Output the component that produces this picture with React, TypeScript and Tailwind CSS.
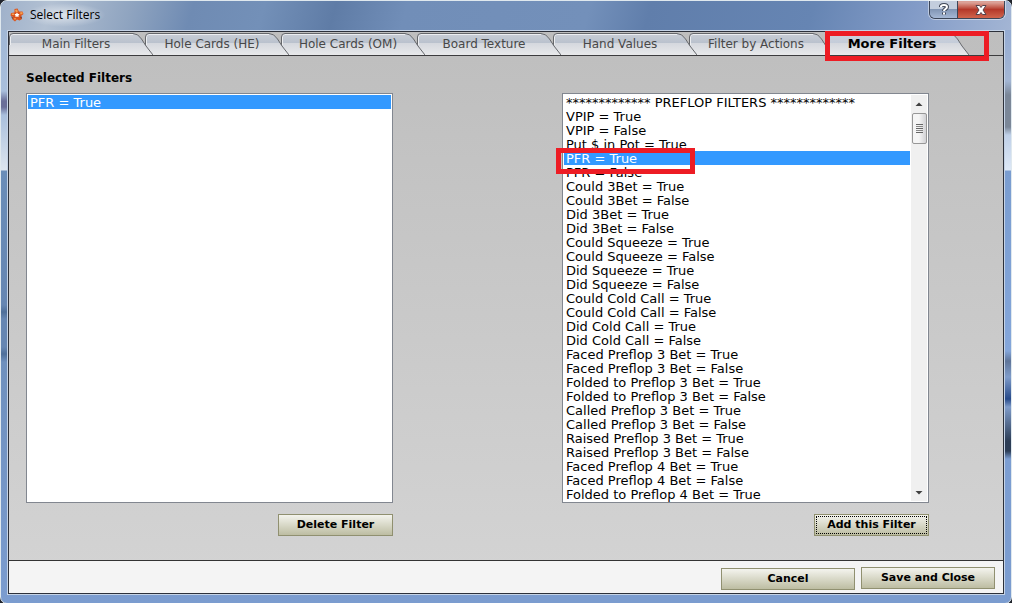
import React, { useState } from 'react';

const TABS = [
    'Main Filters',
    'Hole Cards (HE)',
    'Hole Cards (OM)',
    'Board Texture',
    'Hand Values',
    'Filter by Actions',
    'More Filters',
];

const PREFLOP_FILTERS = [
    '************* PREFLOP FILTERS *************',
    'VPIP = True',
    'VPIP = False',
    'Put $ in Pot = True',
    'PFR = True',
    'PFR = False',
    'Could 3Bet = True',
    'Could 3Bet = False',
    'Did 3Bet = True',
    'Did 3Bet = False',
    'Could Squeeze = True',
    'Could Squeeze = False',
    'Did Squeeze = True',
    'Did Squeeze = False',
    'Could Cold Call = True',
    'Could Cold Call = False',
    'Did Cold Call = True',
    'Did Cold Call = False',
    'Faced Preflop 3 Bet = True',
    'Faced Preflop 3 Bet = False',
    'Folded to Preflop 3 Bet = True',
    'Folded to Preflop 3 Bet = False',
    'Called Preflop 3 Bet = True',
    'Called Preflop 3 Bet = False',
    'Raised Preflop 3 Bet = True',
    'Raised Preflop 3 Bet = False',
    'Faced Preflop 4 Bet = True',
    'Faced Preflop 4 Bet = False',
    'Folded to Preflop 4 Bet = True',
];

const AppLogo: React.FC = () => (
    <svg width="14" height="14" viewBox="0 0 14 14" aria-hidden="true">
        <path d="M4.500 1L7.500 .5 9 3.500 12.500 3.500 13.500 6 11 8 12 11 9.500 12.500 7 11.500 5 13.500 2.500 11.500 3 9 .5 7.500 1 5 4.500 4.500z" fill="#d9541e" />
        <path d="M5 2l2-.5 1 2-2 1zM10 4.500l2.500-.5 0 2-2 .5zM1.500 5.500l2.500 0 0 1.500-2 0zM4 10l2 0-1 2.500z" fill="#f4a052" />
        <path d="M1 8l2 1.500-.5 2zM12 8.500l-2 .5 1.500 2z" fill="#7c3a2a" />
        <path d="M7 4.500l1 1.500h1.500L8.500 7.500v1.500L7 8.500 5.500 9V7.500L4.500 6H6z" fill="#fff" />
    </svg>
);

const WindowButtons: React.FC = () => (
    <div className="flex h-[18px] rounded-b-md border border-t-0 border-[#3c4658] overflow-hidden shadow-[0_0_0_1px_rgba(255,255,255,0.45)]">
        <button aria-label="Help" className="w-7 flex items-center justify-center border-r border-[#3c4658] bg-linear-to-b from-[#c3cddd] from-45% via-[#8296b5] via-50% to-[#a5b8d5]">
            <svg width="10" height="13" viewBox="0 0 10 13" fill="none" aria-hidden="true">
                <path d="M2 4V3.500Q2 2 5 2T8 4Q8 5 6.500 6T5 8M5 9.500V11.500" stroke="#3f4757" strokeWidth="4" />
                <path d="M2 4V3.500Q2 2 5 2T8 4Q8 5 6.500 6T5 8M5 9.500V11.500" stroke="#fff" strokeWidth="2" />
            </svg>
        </button>
        <button aria-label="Close" className="w-[46px] flex items-center justify-center bg-linear-to-b from-[#dba096] from-10% via-[#b4382a] via-50% to-[#d0644c]">
            <svg width="12" height="12" viewBox="0 0 12 12" aria-hidden="true">
                <path d="M1 1.500H4.500L6 3.500 7.500 1.500H11L8 6 11 10.500H7.500L6 8.500 4.500 10.500H1L4 6Z" fill="#fff" stroke="#54424c" />
            </svg>
        </button>
    </div>
);

interface TabProps {
    label: string;
    active: boolean;
    order: number;
    onSelect: () => void;
}

// Every tab is wider than its slot, so its slanted edge lies over the next one.
const Tab: React.FC<TabProps> = ({ label, active, order, onSelect }) => (
    <div className="relative -mr-2 h-[22px] w-36 shrink-0" style={{ zIndex: active ? TABS.length + 1 : TABS.length - order }}>
        <button
            role="tab"
            aria-selected={active}
            onClick={onSelect}
            className={`relative isolate block h-full w-full pr-[10px] pb-px leading-5 whitespace-nowrap ${active ? 'text-[13px] font-bold text-black' : 'text-[12px] text-[#484848]'}`}
        >
            <svg className="absolute inset-0 -z-10" width="144" height="22" viewBox="0 0 144 22" aria-hidden="true">
                <defs>
                    <linearGradient id={`tab-${order}`} x1="0" y1="0" x2="0" y2="1">
                        <stop offset="0" stopColor={active ? '#ccd2dc' : '#c9ced6'} />
                        <stop offset="0.45" stopColor={active ? '#c4ccd9' : '#b9c1cd'} />
                        <stop offset="0.46" stopColor="#d5d8de" />
                        <stop offset="1" stopColor="#e8e9eb" />
                    </linearGradient>
                </defs>
                <path d="M.5 22V4Q.5 .5 4 .5H124Q129 .5 132.500 6L137 13 144 22Z" fill={`url(#tab-${order})`} />
                <path d="M1.500 12V4Q1.500 1.500 4 1.500H124" fill="none" stroke="#eceef1" />
                <path d="M.5 12V4Q.5 .5 4 .5H124Q129 .5 132.500 6L137 13 144 22" fill="none" stroke="#66686c" />
            </svg>
            {label}
        </button>
        {active && (
            <div className="pointer-events-none absolute -top-[2px] left-0 h-[30px] w-[164px] border-[5px] border-[#ed1c24]" />
        )}
    </div>
);

interface FilterListProps {
    id: string;
    label?: string;
    items: string[];
    value: string;
    onChange: (value: string) => void;
}

const FilterList: React.FC<FilterListProps> = ({ id, label, items, value, onChange }) => (
    <select
        id={id}
        aria-label={label}
        size={29}
        value={value}
        onChange={(e) => onChange(e.target.value)}
        className="block h-[408px] min-w-0 flex-1 appearance-none overflow-y-auto rounded-none border-0 bg-white p-px text-[13px] leading-[14px] text-black outline-none [scrollbar-width:none]"
    >
        {items.map((item) => (
            <option
                key={item}
                value={item}
                className="h-[14px] min-h-0 px-[2px] py-0 leading-[14px] checked:bg-linear-to-r checked:from-[#3399ff] checked:to-[#3399ff] checked:[-webkit-text-fill-color:white]"
            >
                {item}
            </option>
        ))}
    </select>
);

const ScrollBar: React.FC = () => (
    <div className="my-px mr-px flex w-4 flex-col items-center bg-[#f0f0f0]" aria-hidden="true">
        <svg width="16" height="18" viewBox="0 0 16 18">
            <path d="M4.500 11L8 7.500 11.500 11Z" fill="#404040" />
        </svg>
        <div className="flex h-[31px] w-[15px] flex-col items-center justify-center gap-px rounded-xs border border-[#979797] bg-linear-to-r from-[#f5f5f5] from-45% to-[#d2d2d5]">
            <i className="h-px w-[7px] bg-[#666]" />
            <i className="h-px w-[7px] bg-[#888]" />
            <i className="h-px w-[7px] bg-[#666]" />
            <i className="h-px w-[7px] bg-[#888]" />
            <i className="h-px w-[7px] bg-[#666]" />
        </div>
        <svg className="mt-auto" width="16" height="18" viewBox="0 0 16 18">
            <path d="M4.500 8L8 11.500 11.500 8Z" fill="#404040" />
        </svg>
    </div>
);

const BUTTON =
    'flex h-[22px] items-center justify-center border border-[#909070] bg-linear-to-b from-[#f4f4ee] to-[#bdbda2] text-[11px] font-bold whitespace-nowrap text-black';

const App: React.FC = () => {
    const [tab, setTab] = useState('More Filters');
    const [selected, setSelected] = useState<string[]>(['PFR = True']);
    const [current, setCurrent] = useState('PFR = True');
    const [available, setAvailable] = useState('PFR = True');

    const addFilter = () => {
        if (!selected.includes(available)) {
            setSelected([...selected, available]);
        }
    };

    const deleteFilter = () => setSelected(selected.filter((item) => item !== current));

    return (
        <div className="flex min-h-screen flex-col bg-[#20242c] pb-px font-['Verdana','DejaVu_Sans',sans-serif]">
            <div className="flex flex-1 flex-col rounded-[7px] border border-[#dfe8ee] bg-[linear-gradient(#9db4d2,#a9bfdc_90px,#6a6f98_100px,#6a6f98_106px,#a9bfdc_114px,#dde5ef_169px,#6a8db8_170px,#6686b2_304px,#4f6f99_311px,#6686b2_318px,#6686b2_346px,#4f6f99_353px,#6f90bd_361px,#7b9ccf),linear-gradient(#8ca5d1,#a3b6d4_80px,#7b8798_94px,#7b8798_126px,#bfd0e8_134px,#dde8f6_169px,#7a9dd0_170px,#84a6da_350px,#5f7599_360px,#7f9cca_376px,#274a8a_398px,#7f9cca_406px,#2c3d56_440px,#2c3d56_450px,#7c9ed2_458px,#7b9ccf)] bg-[length:50%_100%] bg-[position:left,right] bg-no-repeat px-[6px] pb-2">
                <div className="-mx-[6px] flex h-[29px] items-start justify-between rounded-t-[6px] bg-[linear-gradient(105deg,#9fb1ca,#b3c1d3_5%,#8fa4c0_13%,#6f8bb3_19%,#7390b8_26%,#5f7ca6_33%,#718eb8_40%,#7390ba_58%,#607eab_64%,#6685b3_80%,#829bc7_90%,#a3b5d4)] pl-[9px] pr-[6px]">
                    <div className="flex h-7 items-center">
                        <AppLogo />
                        <h1 className="bg-radial from-white/60 to-transparent to-70% px-[6px] py-1 font-['Segoe_UI','Open_Sans',sans-serif] text-[12px] leading-4 text-black">Select Filters</h1>
                    </div>
                    <WindowButtons />
                </div>

                <main className="flex flex-1 flex-col border border-[#c5d3e6]">
                    <div className="flex flex-1 flex-col border border-[#2c303a] bg-linear-to-b from-[#bebebe] to-[#d4d4d4]">
                        <div role="tablist" className="isolate flex border-b border-[#3c3c3e] pt-px">
                            {TABS.map((label, i) => (
                                <Tab key={label} label={label} order={i} active={tab === label} onSelect={() => setTab(label)} />
                            ))}
                        </div>

                        <div className="flex flex-1 gap-[169px] pt-3 pr-[74px] pb-6 pl-[17px]">
                            <section className="flex min-w-0 flex-1 flex-col">
                                <label htmlFor="selected-filters" className="h-[25px] text-[12px] leading-5 font-bold">
                                    Selected Filters
                                </label>
                                <div className="flex border border-[#828790] bg-white">
                                    <FilterList id="selected-filters" items={selected} value={current} onChange={setCurrent} />
                                </div>
                                <button onClick={deleteFilter} className={`${BUTTON} mt-[11px] w-[115px] self-end`}>
                                    Delete Filter
                                </button>
                            </section>

                            <section className="flex min-w-0 flex-1 flex-col pt-[25px]">
                                <div className="relative flex border border-[#828790] bg-white">
                                    <FilterList
                                        id="available-filters"
                                        label="Available Filters"
                                        items={PREFLOP_FILTERS}
                                        value={available}
                                        onChange={setAvailable}
                                    />
                                    <ScrollBar />
                                    <div className="pointer-events-none absolute top-[54px] -left-[7px] h-[26px] w-[139px] border-[5px] border-[#ed1c24]" />
                                </div>
                                <button onClick={addFilter} className={`${BUTTON} mt-[11px] w-[115px] self-end p-px`}>
                                    <span className="flex h-full w-full items-center justify-center border border-dotted border-black">
                                        Add this Filter
                                    </span>
                                </button>
                            </section>
                        </div>

                        <footer className="flex items-center justify-end gap-[6px] border-t border-[#333] bg-[#f4f4f4] px-2 pt-[6px] pb-1">
                            <button className={`${BUTTON} mt-px -mb-px w-[134px]`}>Cancel</button>
                            <button className={`${BUTTON} w-[134px]`}>Save and Close</button>
                        </footer>
                    </div>
                </main>
            </div>
        </div>
    );
};

export default App;
